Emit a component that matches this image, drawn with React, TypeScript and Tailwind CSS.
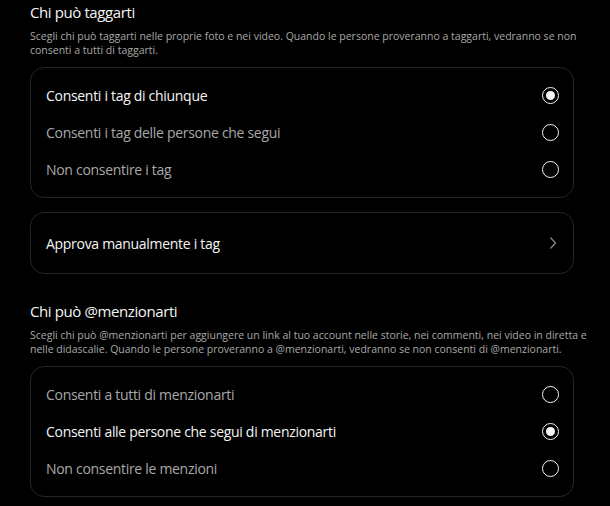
import React from "react";

function Radio({ on }: { on: boolean }) {
  return (
    <span className="w-[17px] h-[17px] rounded-full border-[1.5px] border-[#f5f5f5] flex items-center justify-center">
      {on && <span className="w-[9px] h-[9px] rounded-full bg-[#f5f5f5]" />}
    </span>
  );
}

function Row({ label, on }: { label: string; on: boolean }) {
  return (
    <div className="h-[37px] flex items-center justify-between pl-[15px] pr-[14px]">
      <span className={`text-[14px] tracking-[-0.3px] ${on ? "text-[#f5f5f5]" : "text-[#a8a8a8]"}`}>{label}</span>
      <Radio on={on} />
    </div>
  );
}

export default function App() {
  return (
    <div
      className="bg-black w-[610px] h-[506px] overflow-hidden pl-[30px] pr-[36px]"
      style={{ fontFamily: '"Open Sans", "Noto Sans", sans-serif' }}
    >
      <div className="pt-[2px] text-[15px] tracking-[-0.4px] text-[#f5f5f5] leading-[20px]">Chi può taggarti</div>
      <div className="mt-[7px] w-[558px] text-[10.5px] leading-[14px] text-[#a8a8a8]">
        Scegli chi può taggarti nelle proprie foto e nei video. Quando le persone proveranno a taggarti, vedranno se non consenti a tutti di taggarti.
      </div>
      <div className="mt-[10px] border border-[#262626] rounded-[14px] py-[9px]">
        <Row label="Consenti i tag di chiunque" on />
        <Row label="Consenti i tag delle persone che segui" on={false} />
        <Row label="Non consentire i tag" on={false} />
      </div>
      <div className="mt-[14px] border border-[#262626] rounded-[14px] h-[62px] flex items-center justify-between pl-[15px] pr-[15px]">
        <span className="text-[14px] tracking-[-0.3px] text-[#f5f5f5]">Approva manualmente i tag</span>
        <svg width="10" height="14" viewBox="0 0 10 14" fill="none">
          <path d="M2.5 1.5 L7.5 7 L2.5 12.5" stroke="#8e8e8e" strokeWidth="1.2" />
        </svg>
      </div>
      <div className="mt-[27px] text-[15px] tracking-[-0.4px] text-[#f5f5f5] leading-[20px]">Chi può @menzionarti</div>
      <div className="mt-[7px] w-[558px] text-[10.5px] leading-[14px] text-[#a8a8a8]">
        Scegli chi può @menzionarti per aggiungere un link al tuo account nelle storie, nei commenti, nei video in diretta e nelle didascalie. Quando le persone proveranno a @menzionarti, vedranno se non consenti di @menzionarti.
      </div>
      <div className="mt-[10px] border border-[#262626] rounded-[14px] py-[9px]">
        <Row label="Consenti a tutti di menzionarti" on={false} />
        <Row label="Consenti alle persone che segui di menzionarti" on />
        <Row label="Non consentire le menzioni" on={false} />
      </div>
    </div>
  );
}
